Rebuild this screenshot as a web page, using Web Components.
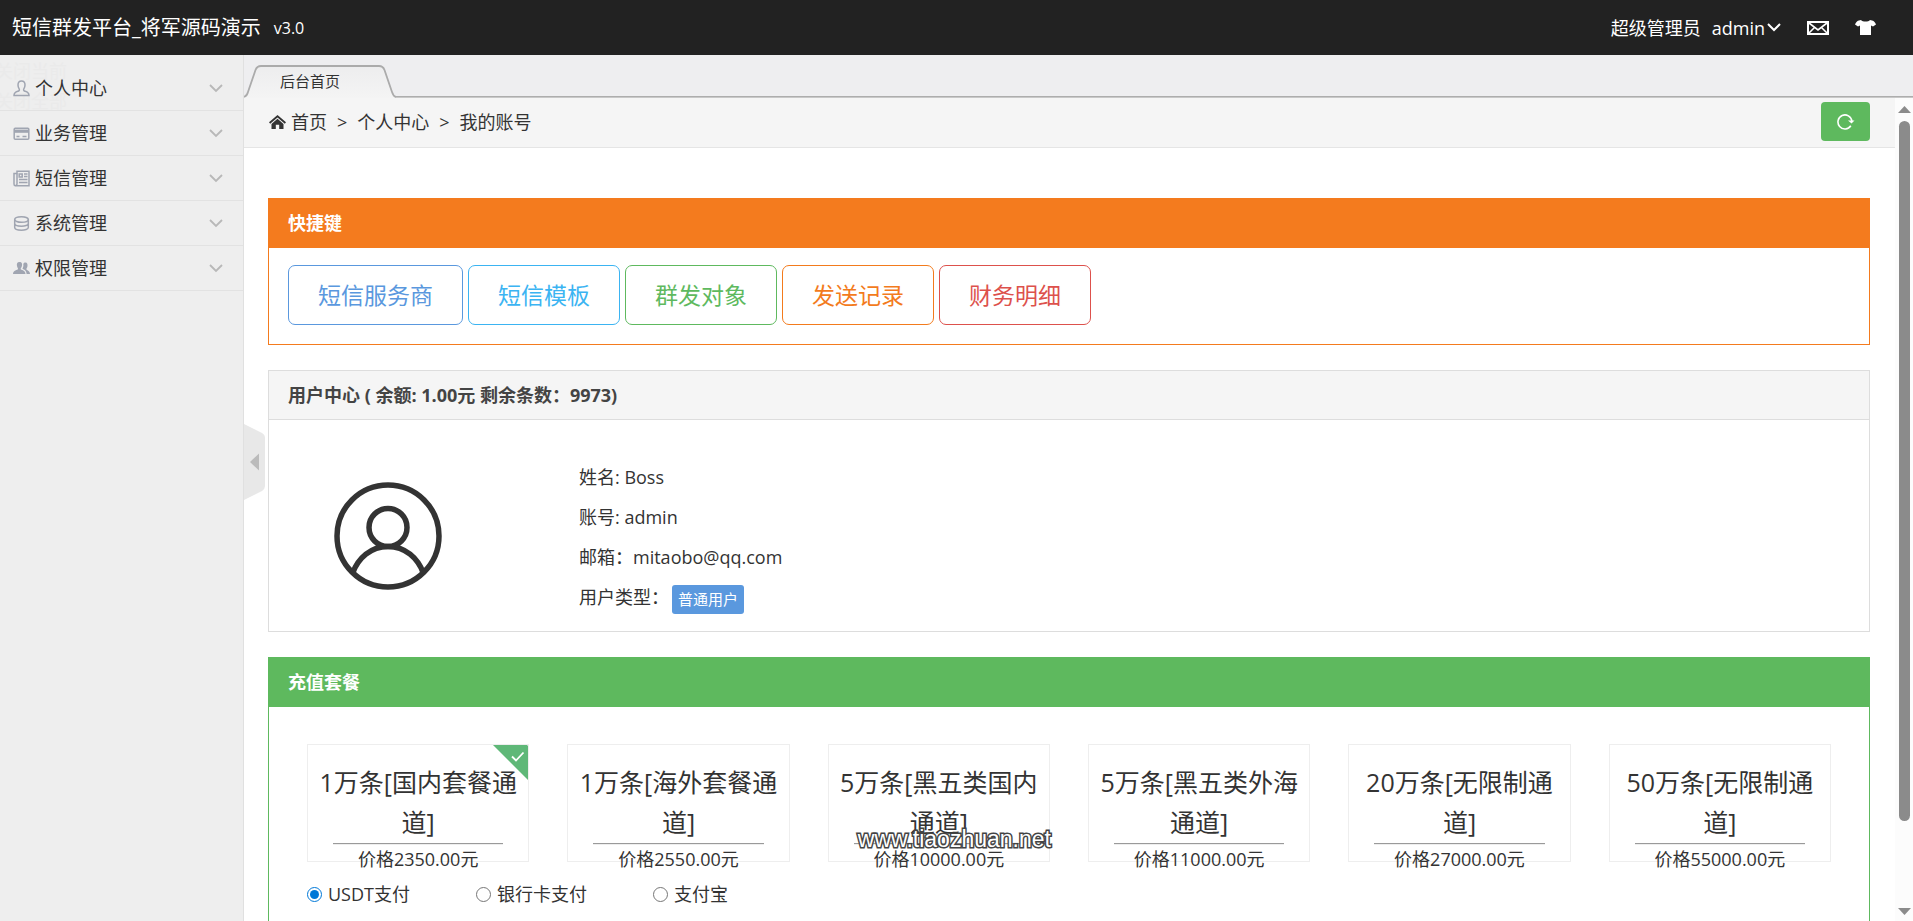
<!DOCTYPE html>
<html lang="zh-CN">
<head>
<meta charset="utf-8">
<title>短信群发平台</title>
<style>
html, body { margin: 0; height: 100%; }
body { font: 18px/30px "Open Sans", "Noto Sans CJK SC", sans-serif; color: #333; background: #fff; overflow: hidden; }
</style>
</head>
<body>
<admin-app></admin-app>

<template id="admin-app">
  <style>
    :host { display: flex; flex-direction: column; height: 100vh; position: relative; }
    .body { flex: 1; display: flex; min-height: 0; }
    main { flex: 1; min-width: 0; display: flex; flex-direction: column; }
    .frame { flex: 1; min-height: 0; display: flex; }
    .page { flex: 1; min-width: 0; overflow-y: auto; scrollbar-width: none; }
    .content { display: flex; flex-direction: column; gap: 25px; padding: 50px 25px 40px 24px; }
    .links { display: flex; flex-wrap: wrap; gap: 5px; padding: 17px 19px 19px; }
    .plans { display: grid; grid-template-columns: repeat(6, 1fr); gap: 38px; padding: 37px 38px 0; }
    side-handle { position: absolute; left: 244px; top: 50%; transform: translateY(-50%); }
    water-mark { position: absolute; left: 45%; bottom: 68px; }
    .links, .plans { box-sizing: border-box; }
  </style>
  <app-header></app-header>
  <div class="body">
    <side-nav>
      <nav-item label="个人中心" icon="user"></nav-item>
      <nav-item label="业务管理" icon="card"></nav-item>
      <nav-item label="短信管理" icon="news"></nav-item>
      <nav-item label="系统管理" icon="data"></nav-item>
      <nav-item label="权限管理" icon="group"></nav-item>
    </side-nav>
    <main>
      <tab-strip>后台首页</tab-strip>
      <div class="frame">
        <div class="page">
          <crumb-bar></crumb-bar>
          <div class="content">
            <ui-panel style="--line:#f47b1e;--head:#f47b1e;--ink:#fff">
              <span slot="title">快捷键</span>
              <div class="links">
                <quick-link style="--tone:#5a98de">短信服务商</quick-link>
                <quick-link style="--tone:#3bb4f2">短信模板</quick-link>
                <quick-link style="--tone:#5eb95e">群发对象</quick-link>
                <quick-link style="--tone:#f37b1d">发送记录</quick-link>
                <quick-link style="--tone:#dd514c">财务明细</quick-link>
              </div>
            </ui-panel>
            <ui-panel style="--line:#ddd;--head:#f5f5f5;--ink:#444">
              <span slot="title">用户中心 ( 余额: 1.00元 剩余条数：9973)</span>
              <user-card></user-card>
            </ui-panel>
            <ui-panel style="--line:#5eb95e;--head:#5eb95e;--ink:#fff">
              <span slot="title">充值套餐</span>
              <div class="plans">
                <plan-card selected><span slot="name">1万条[国内套餐通道]</span><span slot="price">价格2350.00元</span></plan-card>
                <plan-card><span slot="name">1万条[海外套餐通道]</span><span slot="price">价格2550.00元</span></plan-card>
                <plan-card><span slot="name">5万条[黑五类国内通道]</span><span slot="price">价格10000.00元</span></plan-card>
                <plan-card><span slot="name">5万条[黑五类外海通道]</span><span slot="price">价格11000.00元</span></plan-card>
                <plan-card><span slot="name">20万条[无限制通道]</span><span slot="price">价格27000.00元</span></plan-card>
                <plan-card><span slot="name">50万条[无限制通道]</span><span slot="price">价格55000.00元</span></plan-card>
              </div>
              <pay-options></pay-options>
            </ui-panel>
          </div>
        </div>
        <scroll-rail></scroll-rail>
      </div>
    </main>
  </div>
  <side-handle></side-handle>
  <water-mark>www.tiaozhuan.net</water-mark>
</template>

<template id="app-header">
  <style>
    :host { display: flex; align-items: center; height: 55px; padding: 0 37px 0 12px; background: #222; color: #fff; }
    a { color: inherit; text-decoration: none; }
    .name { font-size: 20px; }
    .ver { font-size: 16px; margin-left: 13px; }
    .right { margin-left: auto; display: flex; align-items: center; }
    .who { margin-right: 11px; }
    button { display: flex; align-items: center; gap: 2px; font: inherit; color: inherit; background: none; border: 0; padding: 0; }
    .mail { margin: 0 26px; }
    svg { display: block; }
  </style>
  <a class="name" href="#">短信群发平台_将军源码演示</a><span class="ver">v3.0</span>
  <div class="right">
    <span class="who">超级管理员</span>
    <button type="button">admin
      <svg width="14" height="9" viewBox="0 0 14 9" fill="none" stroke="#fff" stroke-width="2"><path d="M1 1l6 6 6-6"/></svg>
    </button>
    <button type="button" class="mail" aria-label="消息">
      <svg width="22" height="14" viewBox="0 0 22 14" fill="none" stroke="#fff"><path stroke-width="2" d="M1 1h20v12H1z"/><path stroke-width="1.6" d="M2 2l9 7 9-7M2 12l6-6M20 12l-6-6"/></svg>
    </button>
    <button type="button" aria-label="换肤">
      <svg width="21" height="15" viewBox="0 0 21 15" fill="#fff"><path d="M6 0c1.500 2 7.500 2 9 0l3 .7c1 .4 2 1.600 3 3.800l-3 2-2-1V15H5V5.500l-2 1-3-2C1 2.300 2 1.100 3 .7z"/></svg>
    </button>
  </div>
</template>

<template id="side-nav">
  <style>
    :host { display: block; position: relative; box-sizing: border-box; width: 244px; padding-top: 11px; background: #eee; border-right: 1px solid #e0e0e0; overflow: hidden; }
    nav { position: relative; }
    .menu { position: absolute; left: -5px; top: 1px; color: #eaeaea; }
    .menu span { display: block; }
  </style>
  <div class="menu"><span>关闭当前</span><span>关闭全部</span></div>
  <nav><slot></slot></nav>
</template>

<template id="nav-item">
  <style>
    :host { display: block; }
    a { display: flex; align-items: center; gap: 5px; box-sizing: border-box; height: 45px; padding: 0 20px 0 13px; border-bottom: 1px solid #e2e2e2; color: #333; text-decoration: none; }
    svg { display: block; }
    .arrow { margin-left: auto; }
  </style>
  <a href="#">
    <svg class="icon" width="17" height="17" viewBox="0 0 17 17" fill="none" stroke="#a0a5b1" stroke-width="1.5"></svg>
    <span></span>
    <svg class="arrow" width="14" height="9" viewBox="0 0 14 9" fill="none" stroke="#b8b8b8" stroke-width="1.800"><path d="M1 1l6 6 6-6"/></svg>
  </a>
</template>

<template id="tab-strip">
  <style>
    :host { display: flex; align-items: flex-end; height: 43px; background: #eeeef0; }
    .tab { display: grid; width: 152px; height: 33px; }
    .tab > * { grid-area: 1 / 1; }
    a { font-size: 15px; line-height: 32px; padding-left: 36px; color: #333; text-decoration: none; z-index: 1; }
    .rest { flex: 1; height: 1px; background: #c8c8c8; border-top: 1px solid #adadad; }
  </style>
  <div class="tab">
    <svg width="152" height="33" viewBox="0 0 152 33">
      <defs><linearGradient id="g" x2="0" y2="1"><stop stop-color="#ededee"/><stop offset="1" stop-color="#f4f4f4"/></linearGradient></defs>
      <path d="M0 32.500Q3 31 4 27L11.500 5Q13 1 17 1H135Q139 1 140.500 5L148 27Q149.500 31.500 152 32.500V33H0z" fill="url(#g)"/>
      <path d="M0 32Q3 31 4 27L11.500 5Q13 1 17 1H135Q139 1 140.500 5L148 27Q149.500 31.500 152 32" fill="none" stroke="#ababab" stroke-width="1.800"/>
    </svg>
    <a href="#"><slot></slot></a>
  </div>
  <div class="rest"></div>
</template>

<template id="crumb-bar">
  <style>
    :host { display: flex; align-items: center; gap: 10px; box-sizing: border-box; height: 50px; padding: 0 25px 2px; background: #f5f5f5; border-bottom: 1px solid #e5e5e5; }
    a { color: inherit; text-decoration: none; display: flex; align-items: center; gap: 5px; }
    button { margin-left: auto; width: 49px; height: 39px; display: grid; place-items: center; padding: 0; border: 0; border-radius: 4px; background: #5eb95e; }
    svg { display: block; }
  </style>
  <a href="#"><svg width="17" height="14" viewBox="0 0 17 14" fill="#333"><path d="M8.500 0L17 7.300l-1.200 1.400L8.500 2.600 1.200 8.700 0 7.300z"/><path d="M8.500 3.800L14.500 9v5h-4.300V9.800H6.800V14H2.500V9z"/></svg>首页</a>
  <span>&gt;</span><a href="#">个人中心</a><span>&gt;</span><span>我的账号</span>
  <button type="button" aria-label="刷新">
    <svg width="18" height="16" viewBox="0 0 18 16" fill="none" stroke="#fff" stroke-width="1.600"><path d="M13.800 11.800A7 7 0 1 1 14.900 7"/><path d="M11 6.500h6.500L14.500 9.500z" fill="#fff" stroke="none"/></svg>
  </button>
</template>

<template id="ui-panel">
  <style>
    :host { display: block; border: 1px solid var(--line); background: #fff; }
    h2 { margin: 0; padding: 0 19px; height: 48px; line-height: 48px; font-size: 18px; font-weight: 700; color: var(--ink); background: var(--head); border-bottom: 1px solid var(--line); }
  </style>
  <h2><slot name="title"></slot></h2>
  <slot></slot>
</template>

<template id="quick-link">
  <style>
    :host { display: block; }
    a { display: block; box-sizing: border-box; height: 60px; line-height: 58px; padding: 0 29px; font-size: 23px; border: 1px solid var(--tone); border-radius: 7px; color: var(--tone); text-decoration: none; }
  </style>
  <a href="#"><slot></slot></a>
</template>

<template id="user-card">
  <style>
    :host { display: flex; align-items: flex-start; gap: 137px; padding: 37px 65px 14px; }
    svg { display: block; margin-top: 25px; }
    .row { line-height: 40px; height: 40px; display: flex; white-space: pre; }
    .badge { align-self: center; margin: 4px 0 0 3px; padding: 0 6px; font-size: 15px; line-height: 29px; border-radius: 3px; background: #5a98de; color: #fff; }
  </style>
  <svg width="108" height="108" viewBox="0 0 108 108" fill="none" stroke="#333" stroke-width="5.500"><circle cx="54" cy="54" r="51"/><circle cx="54" cy="45.500" r="19"/><path d="M18.500 91.500C24 76 37 64.500 54 64.500S84 76 89.500 91.500"/></svg>
  <div>
    <div class="row">姓名: Boss</div>
    <div class="row">账号: admin</div>
    <div class="row">邮箱：mitaobo@qq.com</div>
    <div class="row">用户类型：<span class="badge">普通用户</span></div>
  </div>
</template>

<template id="plan-card">
  <style>
    :host { display: block; position: relative; box-sizing: border-box; height: 118px; padding: 17px 8px 0; border: 1px solid #eee; text-align: center; }
    .name { font-size: 25px; line-height: 40px; }
    .price { line-height: 28px; }
    hr { margin: 1px 17px 0; border: 0; border-top: 1px solid #9a9a9a; border-bottom: 1px solid #eee; }
    .mark { display: none; position: absolute; right: 0; top: 0; }
    :host([selected]) .mark { display: block; }
  </style>
  <svg class="mark" width="35" height="35" viewBox="0 0 35 35"><path d="M0 0H34L35 1V35z" fill="#5fb878"/><path d="M19 11.500l4 4 7.500-8" fill="none" stroke="#fff" stroke-width="1.800"/></svg>
  <div class="name"><slot name="name"></slot></div>
  <hr>
  <div class="price"><slot name="price"></slot></div>
</template>

<template id="pay-options">
  <style>
    :host { display: flex; gap: 66px; padding: 17px 38px 60px; }
    label { display: flex; align-items: center; gap: 6px; }
    input { margin: 0; width: 15px; height: 15px; accent-color: #0078d7; }
  </style>
  <label><input type="radio" name="pay" checked>USDT支付</label>
  <label><input type="radio" name="pay">银行卡支付</label>
  <label><input type="radio" name="pay">支付宝</label>
</template>

<template id="scroll-rail">
  <style>
    :host { display: flex; flex-direction: column; align-items: center; box-sizing: border-box; width: 18px; padding: 8px 0 6px; background: #fcfcfc; }
    svg { display: block; }
    .thumb { flex: 699; width: 11px; margin: 8px 0; border-radius: 6px; background: #8b8b8b; }
    .gap { flex: 79; }
  </style>
  <svg width="13" height="7" viewBox="0 0 13 7" fill="#8b8b8b"><path d="M6.500 0L13 7H0z"/></svg>
  <div class="thumb"></div>
  <div class="gap"></div>
  <svg width="13" height="7" viewBox="0 0 13 7" fill="#8b8b8b"><path d="M0 0h13L6.500 7z"/></svg>
</template>

<template id="side-handle">
  <style>
    :host { display: block; }
    button { display: block; padding: 2px 0 0; border: 0; background: none; }
    svg { display: block; }
  </style>
  <button type="button" aria-label="收起侧栏"><svg width="21" height="76" viewBox="0 0 21 76"><path d="M0 0L18 9Q21 10.500 21 14V62Q21 65 18 67L0 76z" fill="#e8e8e8"/><path d="M6 38L15 29.500V46.500z" fill="#bbb"/></svg></button>
</template>

<template id="water-mark">
  <style>
    :host { display: block; font: 23px/28px "Liberation Sans", sans-serif; color: #fff; -webkit-text-stroke: 3px #444; paint-order: stroke fill; margin-left: -3px; pointer-events: none; }
  </style>
  <slot></slot>
</template>

<script>
const ICONS = {
  user: '<path d="M8.500 1C5.500 1 5 3 5 5c0 2 .8 3.200 1.300 4.200.4 1-.3 1.800-1.500 2.100C2.500 12 1 12.500 1 15.500h15c0-3-1.500-3.500-3.800-4.200-1.200-.3-1.900-1.100-1.500-2.100C11.200 8.200 12 7 12 5c0-2-.5-4-3.500-4z"/>',
  card: '<rect x="1.200" y="3.200" width="14.600" height="11" rx="1"/><path d="M1 6.200h15" stroke-width="3.200"/><path d="M3.500 11.500h3M9.500 11.500h4"/>',
  news: '<path d="M4 1.200h12v14.600H2.500Q1 15.800 1 14V3.500h3z"/><path d="M4 3.500V14q0 1.500-1.500 1.500"/><path d="M6.200 4h3v3h-3zM11 4h3.500M11 6.500h3.500M6 9.500h8.500M6 12.500h8.500"/>',
  data: '<ellipse cx="8.500" cy="4.500" rx="6.800" ry="2.800"/><path d="M1.700 4.500V12.500c0 3.600 13.600 3.600 13.600 0V4.500M1.700 8.500c0 3.600 13.600 3.600 13.600 0"/>',
  group: '<g fill="#a0a5b1" stroke="none"><path d="M6.500 2C4 2 3.500 4 4 6c.3 1.500 1 2 1 3-.3 1.200-5 1-5 5h12.500c0-4-4.500-3.800-4.800-5 0-1 .9-1.500 1.200-3C9.400 4 9 2 6.500 2z"/><path d="M12.500 2.500c-1.300 0-2 .6-2.200 1.500.3 2-.1 3.300-.9 4.700 1.600.9 4 1.600 4.200 5.300H17c0-3.500-3.600-3.600-3.600-4.700 0-.9.7-1.300 1-2.800.4-2-.1-4-1.900-4z"/></g>'
};

class Part extends HTMLElement {
  constructor() {
    super();
    this.attachShadow({ mode: 'open' })
      .append(document.getElementById(this.localName).content.cloneNode(true));
  }
}

customElements.define('nav-item', class extends Part {
  connectedCallback() {
    this.shadowRoot.querySelector('span').textContent = this.getAttribute('label');
    this.shadowRoot.querySelector('.icon').innerHTML = ICONS[this.getAttribute('icon')];
  }
});
for (const name of ['app-header', 'side-nav', 'tab-strip', 'crumb-bar', 'ui-panel', 'quick-link',
  'user-card', 'plan-card', 'pay-options', 'scroll-rail', 'side-handle', 'water-mark', 'admin-app']) {
  customElements.define(name, class extends Part {});
}
</script>
</body>
</html>
